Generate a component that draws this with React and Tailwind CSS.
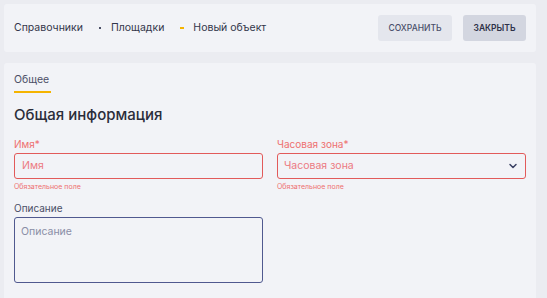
import { ChevronDown } from "lucide-react";

export default function App() {
  return (
    <div className="w-[547px] h-[298px] overflow-hidden bg-[#ebecf1] pl-1 pr-[11px] pt-1 font-['Inter',sans-serif] text-[#33364a]">
      {/* Header */}
      <header className="h-12 bg-[#f2f3f7] rounded-[3px] flex items-center justify-between pl-[10px] pr-[10px]">
        <nav className="flex items-center text-[10.5px]">
          <span>Справочники</span>
          <span className="ml-[16px] mr-[10px] w-[2px] h-[2px] bg-[#4b4f66]"></span>
          <span>Площадки</span>
          <span className="ml-[16px] mr-[9px] w-[4px] h-[2px] bg-[#f5b400]"></span>
          <span>Новый объект</span>
        </nav>
        <div className="flex items-center gap-[11px]">
          <button className="h-[26px] w-[74px] rounded-[3px] bg-[#e4e6ed] text-[8.5px] font-medium uppercase text-[#4a4f6a]">
            Сохранить
          </button>
          <button className="h-[26px] w-[63px] rounded-[3px] bg-[#d3d6e0] text-[8.5px] font-semibold uppercase text-[#2d3047]">
            Закрыть
          </button>
        </div>
      </header>

      {/* Content */}
      <main className="mt-[11px] h-[240px] bg-[#f2f3f7] rounded-[3px] px-[10px] pt-[10px]">
        <div className="flex">
          <div className="border-b-2 border-[#f5b400] pb-[4px] pr-[2px] text-[10.5px] leading-[14px] text-[#4b4f66]">
            Общее
          </div>
        </div>

        <h1 className="mt-[12px] text-[15px] leading-[20px] font-medium text-[#2a2d3a]">
          Общая информация
        </h1>

        <div className="mt-[13px] grid grid-cols-2 gap-x-[14px]">
          <div>
            <label className="block text-[10px] leading-[12px] text-[#ee7070]">Имя*</label>
            <input
              placeholder="Имя"
              className="mt-[2.5px] w-full h-[26px] rounded-[3px] border border-[#e25a5a] bg-transparent px-[7px] text-[10.5px] outline-none placeholder:text-[#ec7a82]"
            />
            <p className="mt-[3.5px] text-[7px] leading-[10px] text-[#ee7070]">Обязательное поле</p>
          </div>
          <div>
            <label className="block text-[10px] leading-[12px] text-[#ee7070]">Часовая зона*</label>
            <div className="mt-[2.5px] relative h-[26px] rounded-[3px] border border-[#e25a5a] flex items-center px-[6px]">
              <span className="text-[10.5px] text-[#ec7a82]">Часовая зона</span>
              <ChevronDown className="absolute right-[6px] w-[12px] h-[12px] text-[#3b4163]" strokeWidth={3} />
            </div>
            <p className="mt-[3.5px] text-[7px] leading-[10px] text-[#ee7070]">Обязательное поле</p>
          </div>
        </div>

        <div className="mt-[10px] w-[249px]">
          <label className="block text-[10px] leading-[12px] text-[#4b4f66]">Описание</label>
          <textarea
            placeholder="Описание"
            className="mt-[2.5px] block w-full h-[66px] resize-none rounded-[3px] border border-[#50598f] bg-transparent px-[6px] py-[6px] text-[10.5px] outline-none placeholder:text-[#8a8ea6]"
          />
        </div>
      </main>
    </div>
  );
}
